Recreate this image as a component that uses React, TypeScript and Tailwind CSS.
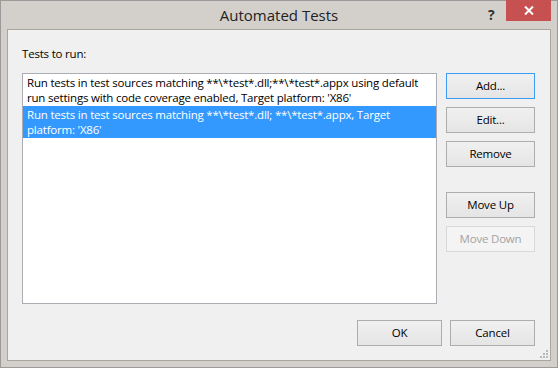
import React from "react";

const font = { fontFamily: '"Segoe UI", "Open Sans", "Noto Sans", sans-serif' };

function Btn({
  children,
  primary,
  disabled,
  className = "",
}: {
  children: React.ReactNode;
  primary?: boolean;
  disabled?: boolean;
  className?: string;
}) {
  const tone = disabled
    ? "border-[#d9d9d9] bg-[#f4f4f4] text-[#a3a3a3]"
    : primary
    ? "border-[#3c9bf5] bg-gradient-to-b from-[#f0f0f0] to-[#e5e5e5] text-black"
    : "border-[#adadad] bg-gradient-to-b from-[#f0f0f0] to-[#e5e5e5] text-black";
  return (
    <div
      className={`flex h-[26px] items-center justify-center border text-[11.5px] tracking-[-0.2px] ${tone} ${className}`}
    >
      {children}
    </div>
  );
}

export default function App() {
  return (
    <div
      className="flex h-[368px] w-[558px] flex-col border border-[#9a9a9a] bg-[#d3d0cc]"
      style={font}
    >
      {/* Title bar */}
      <div className="relative flex h-[28px] shrink-0 items-center justify-center">
        <span className="text-[15px] text-[#222]">Automated Tests</span>
        <span className="absolute left-[487px] top-[3px] text-[14px] font-bold text-[#333]">?</span>
        <div className="absolute right-[6px] top-[-1px] flex h-[21px] w-[45px] items-center justify-center bg-[#c75050]">
          <svg width="10" height="9" viewBox="0 0 10 9">
            <path d="M1 0.5 L9 8.5 M9 0.5 L1 8.5" stroke="#fff" strokeWidth="2" />
          </svg>
        </div>
      </div>

      {/* Client area */}
      <div className="relative mx-[6px] mb-[6px] flex flex-1 flex-col border border-[#a9a6a2] bg-[#f0f0f0] pl-[14px] pr-[15px] pb-[14px]">
        <div className="mt-[16px] h-[15px] text-[11.5px] leading-[15px] tracking-[-0.2px] text-black">
          Tests to run:
        </div>

        <div className="mt-[12px] flex gap-[9px]">
          <div className="h-[231px] flex-1 overflow-hidden border border-[#abadb3] bg-white text-[11.5px] leading-[15px] tracking-[-0.2px]">
            <div className="whitespace-nowrap px-[4px] py-[1px] text-black">
              <div>Run tests in test sources matching **\*test*.dll;**\*test*.appx using default</div>
              <div>run settings with code coverage enabled, Target platform: 'X86'</div>
            </div>
            <div className="whitespace-nowrap bg-[#3399ff] px-[4px] py-[1px] text-white">
              <div>Run tests in test sources matching **\*test*.dll; **\*test*.appx, Target</div>
              <div>platform: 'X86'</div>
            </div>
          </div>

          <div className="flex w-[89px] flex-col">
            <Btn primary>Add...</Btn>
            <Btn className="mt-[8px]">Edit...</Btn>
            <Btn className="mt-[8px]">Remove</Btn>
            <Btn className="mt-[25px]">Move Up</Btn>
            <Btn disabled className="mt-[8px]">Move Down</Btn>
          </div>
        </div>

        <div className="mt-auto flex justify-end gap-[8px]">
          <Btn className="w-[85px]">OK</Btn>
          <Btn className="w-[85px]">Cancel</Btn>
        </div>

        {/* Resize grip */}
        <svg className="absolute bottom-[1px] right-[1px]" width="10" height="10" viewBox="0 0 10 10">
          <g fill="#b8b8b8">
            <rect x="7" y="1" width="2" height="2" />
            <rect x="4" y="4" width="2" height="2" />
            <rect x="7" y="4" width="2" height="2" />
            <rect x="1" y="7" width="2" height="2" />
            <rect x="4" y="7" width="2" height="2" />
            <rect x="7" y="7" width="2" height="2" />
          </g>
        </svg>
      </div>
    </div>
  );
}
